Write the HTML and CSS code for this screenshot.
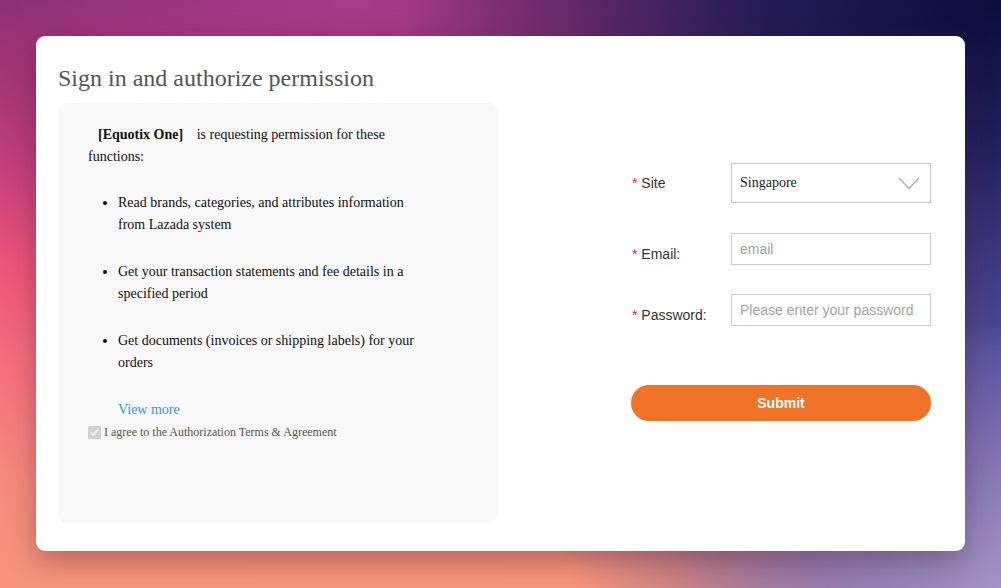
FILE: index.html
```html
<!DOCTYPE html>
<html lang="en">
<head>
  <meta charset="UTF-8" />
  <title>Sign in and authorize permission</title>
  <link rel="stylesheet" href="styles.css">
</head>
<body>
  <div class="card">
    <h1 class="title">Sign in and authorize permission</h1>
    <div class="content">
      <div class="perm-panel">
        <div class="perm-text">
          <p class="intro"><b class="app-name">[Equotix One]</b> is requesting permission for these functions:</p>
          <ul class="perm-list">
            <li>Read brands, categories, and attributes information from Lazada system</li>
            <li>Get your transaction statements and fee details in a specified period</li>
            <li>Get documents (invoices or shipping labels) for your orders</li>
          </ul>
          <a class="view-more" href="#">View more</a>
          <label class="agree">
            <input type="checkbox" checked disabled>
            <span>I agree to the Authorization Terms &amp; Agreement</span>
          </label>
        </div>
      </div>

      <form class="login-form" onsubmit="return false">
        <div class="form-row row-site">
          <label class="form-label"><span class="req">*</span> Site</label>
          <div class="site-select">
            <span>Singapore</span>
            <svg width="22" height="13" viewBox="0 0 22 13">
              <polyline points="1,1 11,11.5 21,1" fill="none" stroke="#a9a9b0" stroke-width="1.2"/>
            </svg>
          </div>
        </div>
        <div class="form-row row-email">
          <label class="form-label low"><span class="req">*</span> Email:</label>
          <input class="text-input" type="text" placeholder="email">
        </div>
        <div class="form-row row-pass">
          <label class="form-label low"><span class="req">*</span> Password:</label>
          <input class="text-input" type="password" placeholder="Please enter your password">
        </div>
        <button class="submit-btn" type="submit">Submit</button>
      </form>
    </div>
  </div>
</body>
</html>
```

FILE: styles.css
```css
html, body {
  height: 100%;
}
body {
  margin: 0;
  padding: 36px;
  box-sizing: border-box;
  font-family: "Liberation Serif", "Times New Roman", serif;
  background:
    radial-gradient(ellipse 32% 45% at 100% 100%, #a193c4 0%, rgba(150, 135, 195, 0.6) 50%, rgba(150, 135, 195, 0) 100%),
    radial-gradient(ellipse 60% 60% at 100% 0%, #0c0c3c 0%, rgba(22, 22, 80, 0.85) 40%, rgba(40, 38, 110, 0) 100%),
    radial-gradient(ellipse 50% 85% at 100% 55%, #4f4c98 0%, rgba(85, 80, 160, 0.85) 45%, rgba(110, 95, 170, 0) 100%),
    radial-gradient(ellipse 45% 30% at 35% 0%, rgba(170, 62, 138, 0.9) 0%, rgba(170, 62, 138, 0) 100%),
    linear-gradient(to bottom, #872c6d 0%, #c33f7c 28%, #ec5478 45%, #f56e7c 62%, #f68a7c 82%, #f7957a 100%);
  overflow: hidden;
}
.card {
  background: #fff;
  border-radius: 9px;
  padding: 28px 22px 28px;
  height: 515px;
  box-sizing: border-box;
  box-shadow: 0 10px 28px rgba(60, 20, 40, 0.35);
}
.title {
  margin: 0 0 11px;
  font-size: 24px;
  line-height: 28px;
  font-weight: normal;
  color: #555;
}
.content {
  display: flex;
}
.perm-panel {
  width: 440px;
  height: 420px;
  box-sizing: border-box;
  background: #f8f8f8;
  border-radius: 9px;
  padding: 21px 30px 0;
}
.perm-text {
  width: 345px;
  font-size: 14px;
  line-height: 22px;
  color: #111;
}
.intro {
  margin: 0 0 24px;
}
.app-name {
  margin: 0 10px;
}
.perm-list {
  margin: 0;
  padding-left: 30px;
}
.perm-list li {
  margin-bottom: 25px;
}
.view-more {
  display: block;
  margin-left: 30px;
  color: #2a9bef;
  text-decoration: none;
}
.agree {
  display: flex;
  align-items: center;
  margin-top: 4px;
  font-size: 12px;
  line-height: 14px;
  color: #555;
}
.agree input {
  width: 13px;
  height: 13px;
  margin: 0 3px 0 0;
}
.login-form {
  margin-left: 133px;
  padding-top: 60px;
  width: 300px;
  font-family: "Liberation Sans", Arial, sans-serif;
}
.form-row {
  display: flex;
  align-items: center;
}
.row-email {
  margin-top: 30px;
}
.row-pass {
  margin-top: 29px;
}
.form-label {
  width: 100px;
  box-sizing: border-box;
  padding-left: 1px;
  font-size: 14px;
  color: #333;
}
.form-label.low {
  padding-top: 9px;
}
.req {
  color: #f5222d;
}
.site-select {
  width: 200px;
  height: 40px;
  box-sizing: border-box;
  border: 1px solid #c6c6ce;
  display: flex;
  align-items: center;
  justify-content: space-between;
  padding: 0 10px 0 8px;
  font-family: "Liberation Serif", "Times New Roman", serif;
  font-size: 14px;
  color: #222;
}
.text-input {
  width: 200px;
  height: 32px;
  box-sizing: border-box;
  border: 1px solid #ccccd2;
  padding: 0 8px;
  margin: 0;
  font-family: "Liberation Sans", Arial, sans-serif;
  font-size: 14px;
  outline: none;
}
.text-input::placeholder {
  color: #a3a3a3;
}
.submit-btn {
  display: block;
  width: 300px;
  height: 36px;
  margin-top: 59px;
  border: none;
  border-radius: 18px;
  background: #f07229;
  color: #fff;
  font-family: "Liberation Sans", Arial, sans-serif;
  font-size: 14px;
  font-weight: bold;
  cursor: pointer;
}
```
